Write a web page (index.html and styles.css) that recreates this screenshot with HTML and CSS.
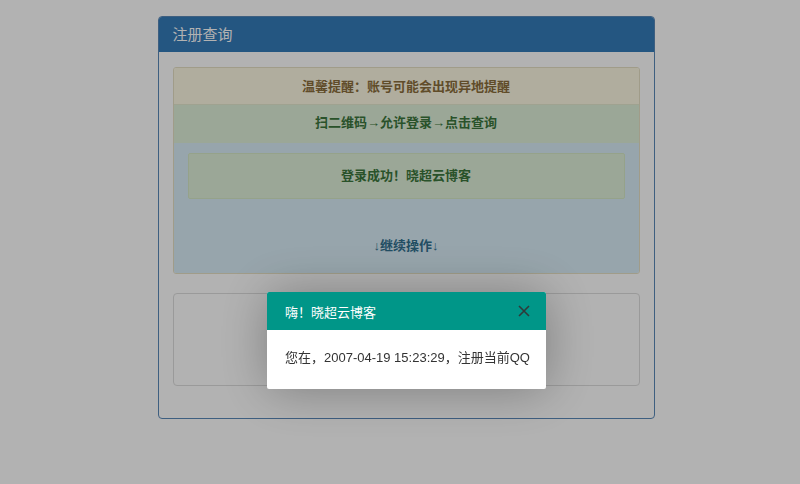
FILE: index.html
```html
<!DOCTYPE html>
<html lang="zh-CN">
<head>
<meta charset="utf-8">
<title>注册查询</title>
<link rel="stylesheet" href="styles.css">
</head>
<body>
<div class="panel">
  <div class="panel-heading">注册查询</div>
  <div class="panel-body">
    <div class="alerts">
      <div class="alert warning">温馨提醒：账号可能会出现异地提醒</div>
      <div class="alert success">扫二维码→允许登录→点击查询</div>
      <div class="alert info">
        <div class="inner-success">登录成功！晓超云博客</div>
        <div class="continue">↓继续操作↓</div>
      </div>
    </div>
    <div class="result-box"></div>
  </div>
</div>

<div class="shade"></div>
<div class="layer">
  <div class="layer-title">
    <span>嗨！晓超云博客</span>
    <svg class="close" width="12" height="12" viewBox="0 0 12 12"><path d="M1 1L11 11M11 1L1 11" stroke="#2f3a3a" stroke-width="1.6" fill="none"/></svg>
  </div>
  <div class="layer-content">您在，2007-04-19 15:23:29，注册当前QQ</div>
</div>
</body>
</html>
```
FILE: styles.css
```css
* { box-sizing: border-box; }
html, body { margin: 0; padding: 0; }
body {
  background: #fff;
  font-family: "Liberation Sans", "Noto Sans CJK SC", sans-serif;
  font-size: 13px;
  color: #333;
  height: 484px;
  overflow: hidden;
}
.panel {
  width: 497px;
  margin: 16px auto 0;
  position: relative;
  left: 6px;
  border: 1px solid #5a88b8;
  border-radius: 4px;
  background: #fff;
}
.panel-heading {
  background: #347bb9;
  color: #fff;
  font-size: 15px;
  height: 35px;
  line-height: 35px;
  padding: 0 14px;
  border-radius: 3px 3px 0 0;
}
.panel-body {
  padding: 15px 14px 32px;
}
.alerts {
  border: 1px solid #e6e0c4;
  border-radius: 3px;
  overflow: hidden;
}
.alert {
  text-align: center;
  font-weight: bold;
  font-size: 13px;
  white-space: nowrap;
}
.warning {
  background: #fcf8e3;
  color: #8a6d3b;
  height: 37px;
  line-height: 37px;
  border-bottom: 1px solid #e4e8cf;
}
.success {
  background: #dff0d8;
  color: #3c763d;
  height: 38px;
  line-height: 36px;
}
.info {
  background: #d9edf7;
  padding: 10px 14px 0;
  height: 130px;
}
.inner-success {
  background: #dff0d8;
  color: #3c763d;
  border: 1px solid #d6e9c6;
  height: 46px;
  line-height: 44px;
  border-radius: 2px;
}
.continue {
  color: #31708f;
  margin-top: 37px;
  line-height: 20px;
}
.result-box {
  margin-top: 19px;
  height: 93px;
  border: 1px solid #ddd;
  border-radius: 4px;
}
.shade {
  position: fixed;
  inset: 0;
  background: rgba(0, 0, 0, 0.3);
}
.layer {
  position: fixed;
  left: 267px;
  top: 292px;
  width: 279px;
  background: #fff;
  border-radius: 2px;
  box-shadow: 1px 1px 50px rgba(0, 0, 0, 0.3);
}
.layer-title {
  background: #009688;
  color: #fff;
  height: 38px;
  padding: 0 16px 0 18px;
  display: flex;
  align-items: center;
  justify-content: space-between;
  font-size: 13px;
  border-radius: 2px 2px 0 0;
}
.close { display: block; }
.layer-content {
  height: 59px;
  line-height: 56px;
  padding: 0 18px;
  color: #333;
  font-size: 13px;
  white-space: nowrap;
}
```
